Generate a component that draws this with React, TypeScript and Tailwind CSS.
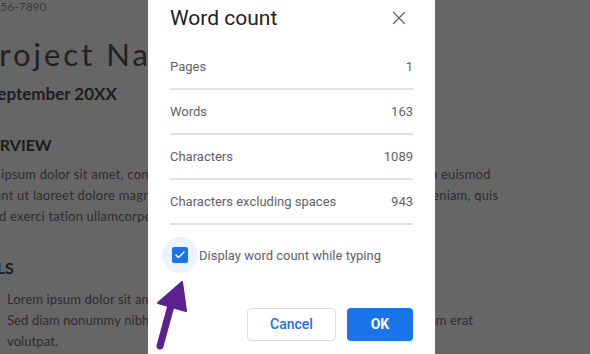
import { X, Check } from "lucide-react";

const rows = [
  { label: "Pages", value: "1" },
  { label: "Words", value: "163" },
  { label: "Characters", value: "1089" },
  { label: "Characters excluding spaces", value: "943" },
];

function DocumentBehind() {
  return (
    <div className="flex flex-col whitespace-nowrap font-['Lato',sans-serif]">
      {/* contact line */}
      <div className="h-[14px] leading-[14px] text-[12px] text-[#999] ml-[-37px]">
        (123) 456-7890
      </div>
      {/* title */}
      <div className="mt-[20px] h-[40px] leading-[40px] text-[31px] tracking-[3px] text-[#555] ml-[-22px]">
        Project Name
      </div>
      <div className="mt-[8px] h-[24px] leading-[24px] text-[17px] font-bold text-[#4d4d4d] ml-[-12px]">
        September 20XX
      </div>

      {/* overview */}
      <div className="mt-[27px] h-[24px] leading-[24px] text-[16px] font-bold text-[#4a4a4a] ml-[-33px]">
        OVERVIEW
      </div>
      <div className="mt-[7px] text-[13px] leading-[21px] tracking-[0.2px] text-[#737373] ml-[-39px]">
        <p>Lorem ipsum dolor sit amet, consectetuer adipiscing elit, sed diam nonummy nibh euismod</p>
        <p>tincidunt ut laoreet dolore magna aliquam erat volutpat. Ut wisi enim ad minim veniam, quis</p>
        <p>nostrud exerci tation ullamcorper suscipit lobortis.</p>
      </div>

      {/* details */}
      <div className="mt-[29px] h-[24px] leading-[24px] text-[16px] font-bold text-[#4a4a4a] ml-[-49px]">
        DETAILS
      </div>
      <div className="mt-[9px] text-[13px] leading-[21px] tracking-[0.1px] text-[#737373] ml-[7px]">
        <p>Lorem ipsum dolor sit amet, consectetuer adipiscing elit,</p>
        <p>Sed diam nonummy nibh euismod tincidunt ut laoreet dolore magna aliquam erat</p>
        <p>volutpat.</p>
      </div>
    </div>
  );
}

function WordCountDialog() {
  return (
    <div className="absolute top-0 left-[148px] h-full w-[287px] bg-white px-[22px] font-['Roboto',sans-serif] text-[#5f6368]">
      <div className="flex h-9 items-center justify-between">
        <h2 className="text-[21px] leading-9 text-[#202124]">Word count</h2>
        <X size={22} strokeWidth={1.4} className="mr-[3px] text-[#5f6368]" />
      </div>

      <div className="mt-[9px] flex flex-col">
        {rows.map((r) => (
          <div key={r.label}>
            <div className="flex h-[43px] items-center justify-between pt-[1px] text-[13px]">
              <span>{r.label}</span>
              <span>{r.value}</span>
            </div>
            <div className="h-[2px] bg-[#e0e1e3]" />
          </div>
        ))}
      </div>

      <div className="mt-[12px] flex items-center">
        <div className="ml-[-8px] flex h-9 w-9 items-center justify-center rounded-full bg-[#edf3fd]">
          <div className="flex h-4 w-4 items-center justify-center rounded-[2px] bg-[#1a73e8]">
            <Check size={12} strokeWidth={3} className="text-white" />
          </div>
        </div>
        <span className="ml-[1px] pt-[1px] text-[13px]">Display word count while typing</span>
      </div>

      <div className="mt-[35px] flex justify-end gap-[11px]">
        <button className="h-[33px] w-[89px] rounded-[4px] border border-[#dadce0] text-[14px] font-medium text-[#1a73e8]">
          Cancel
        </button>
        <button className="h-[33px] w-[66px] rounded-[4px] bg-[#1a73e8] text-[14px] font-bold text-white">
          OK
        </button>
      </div>
    </div>
  );
}

export default function App() {
  return (
    <div className="relative h-[354px] w-[590px] overflow-hidden bg-white">
      <DocumentBehind />
      <div className="absolute inset-0 bg-black/60" />
      <WordCountDialog />
      {/* annotation arrow */}
      <svg className="pointer-events-none absolute inset-0" width="590" height="354">
        <line x1="160" y1="346" x2="172" y2="302" stroke="#5b2191" strokeWidth="7" strokeLinecap="round" />
        <polygon points="182,282 158,303 186,311" fill="#5b2191" strokeLinejoin="round" stroke="#5b2191" strokeWidth="2" />
      </svg>
    </div>
  );
}
